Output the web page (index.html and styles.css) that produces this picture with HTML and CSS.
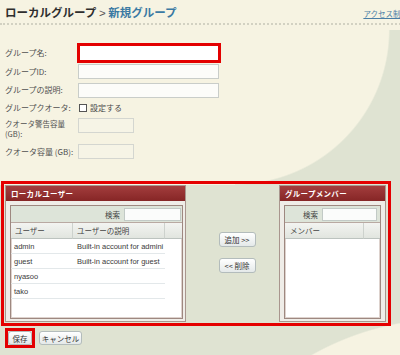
FILE: index.html
```html
<!DOCTYPE html>
<html lang="ja">
<head>
    <meta charset="UTF-8">
    <title>新規グループ</title>
    <link rel="stylesheet" href="styles.css">
</head>
<body>
    <div class="topbar">
        <h1 class="crumb">ローカルグループ <span class="sep">&gt;</span> <span class="current">新規グループ</span></h1>
        <a class="access" href="#">アクセス制御</a>
    </div>

    <div class="form">
        <label class="lbl">グループ名:</label>
        <div><input type="text" class="field field-long field-hl"></div>

        <label class="lbl">グループID:</label>
        <div><input type="text" class="field field-long"></div>

        <label class="lbl">グループの説明:</label>
        <div><input type="text" class="field field-long"></div>

        <label class="lbl">グループクオータ:</label>
        <div class="check"><input type="checkbox" class="box"> <span>設定する</span></div>

        <label class="lbl lbl-two">クオータ警告容量<br>(GB):</label>
        <div><input type="text" class="field field-short"></div>

        <label class="lbl">クオータ容量 (GB):</label>
        <div><input type="text" class="field field-short"></div>
    </div>

    <div class="transfer">
        <div class="panel panel-users">
            <div class="panel-head">ローカルユーザー</div>
            <div class="panel-body">
                <div class="listbox">
                    <div class="search">
                        <span>検索</span>
                        <input type="text" class="search-input">
                    </div>
                    <div class="grid users-grid">
                        <div class="th">ユーザー</div>
                        <div class="th">ユーザーの説明</div>
                        <div class="th th-blank"></div>

                        <div class="td">admin</div>
                        <div class="td">Built-in account for admini</div>
                        <div class="td-blank"></div>

                        <div class="td">guest</div>
                        <div class="td">Built-in account for guest</div>
                        <div class="td-blank"></div>

                        <div class="td">nyasoo</div>
                        <div class="td"></div>
                        <div class="td-blank"></div>

                        <div class="td">tako</div>
                        <div class="td"></div>
                        <div class="td-blank"></div>
                    </div>
                </div>
            </div>
        </div>

        <div class="actions">
            <button class="btn">追加 &gt;&gt;</button>
            <button class="btn">&lt;&lt; 削除</button>
        </div>

        <div class="panel panel-members">
            <div class="panel-head">グループメンバー</div>
            <div class="panel-body">
                <div class="listbox">
                    <div class="search">
                        <span>検索</span>
                        <input type="text" class="search-input">
                    </div>
                    <div class="grid members-grid">
                        <div class="th">メンバー</div>
                        <div class="th th-blank"></div>
                    </div>
                </div>
            </div>
        </div>
    </div>

    <div class="footer">
        <span class="hl"><button class="btn btn-save">保存</button></span>
        <button class="btn btn-cancel">キャンセル</button>
    </div>
</body>
</html>
```

FILE: styles.css
```css
html, body {
    margin: 0;
    height: 100%;
    overflow: hidden;
}

body {
    font-family: "Noto Sans CJK JP", "Liberation Sans", sans-serif;
    font-size: 8px;
    color: #4a4a4a;
    /* cream page with the grey-green swoosh behind the panels */
    background:
        radial-gradient(circle 155px at 235px 30px, #f6f3e2 99%, rgba(246,243,226,0) 100%),
        linear-gradient(#f6f3e2, #f6f3e2) 0 0 / 235px 185px no-repeat,
        linear-gradient(#f6f3e2, #f6f3e2) 0 0 / 400px 30px no-repeat,
        radial-gradient(circle 282px at 450px 600px, #f6f3e2 99.5%, rgba(246,243,226,0) 100%),
        #dfe3d2;
}

/* header */
.topbar {
    width: 403px;
    height: 23px;
    padding-left: 5px;
    display: flex;
    justify-content: space-between;
    border-bottom: 2px dotted #d2d1c2;
}

.crumb {
    margin: 5px 0 0;
    font-size: 11.5px;
    line-height: 14px;
    font-weight: bold;
    color: #2e2e2e;
}

.crumb .sep {
    font-family: "Liberation Sans", sans-serif;
    font-weight: normal;
    color: #555;
}

.crumb .current {
    color: #3b7aa3;
}

.access {
    margin-top: 9px;
    font-size: 7.5px;
    line-height: 10px;
    color: #4a7ea6;
    white-space: nowrap;
}

/* form */
.form {
    margin-top: 18px;
    display: grid;
    grid-template-columns: 73px 1fr;
    grid-template-rows: 20px 17px 20px 15px 21px 31px;
    align-items: center;
    padding-left: 5px;
}

.lbl {
    line-height: 10px;
    color: #505050;
    white-space: nowrap;
}

.lbl-two {
    align-self: start;
    margin-top: 4px;
    font-size: 7.5px;
}

.form > div {
    display: flex;
    align-items: center;
}

.field {
    box-sizing: border-box;
    height: 15px;
    margin: 0;
    padding: 0 2px;
    border: 1px solid #c9cdc9;
    background: #fcfcf9;
    font-size: 8px;
}

.field-long {
    width: 141px;
}

.field-hl {
    width: 144px;
    height: 20px;
    margin-left: -1px;
    border: 3px solid #e30000;
    background: #fff;
}

.field-short {
    width: 56px;
    background: #f6f4e6;
    border-color: #d4d6d0;
}

.check {
    gap: 3px;
}

.box {
    appearance: none;
    box-sizing: border-box;
    width: 8px;
    height: 8px;
    margin: 0 0 0 1px;
    border: 1px solid #555;
    background: #fff;
}

/* transfer area */
.transfer {
    box-sizing: border-box;
    width: 390px;
    height: 145px;
    margin: 14px 0 0 1px;
    padding: 1px 2px 1px 1px;
    border: 3px solid #e50000;
    display: flex;
}

.panel {
    display: flex;
    flex-direction: column;
    border: 1px solid #a9968e;
    background: #efede8;
}

.panel-users {
    width: 179px;
}

.panel-members {
    width: 105px;
}

.panel-head {
    height: 15px;
    padding-left: 5px;
    line-height: 15px;
    font-size: 7.5px;
    font-weight: bold;
    letter-spacing: 0.3px;
    color: #fff;
    background: linear-gradient(#a33d3d, #862626);
}

.panel-body {
    flex: 1;
    display: flex;
    padding: 4px 2px 2px 4px;
}

.panel-members .panel-body {
    padding-right: 4px;
}

.listbox {
    flex: 1;
    display: flex;
    flex-direction: column;
    border: 1px solid #9e8880;
    box-shadow: inset 0 0 0 1px #ddd2cd;
    background: #fff;
}

.search {
    height: 16px;
    display: flex;
    align-items: center;
    justify-content: flex-end;
    gap: 4px;
    padding-right: 1px;
    background: #dde4d9;
    border-bottom: 1px solid #b9a9a2;
    font-size: 7.5px;
    color: #444;
}

.search-input {
    box-sizing: border-box;
    width: 57px;
    height: 13px;
    margin: 0;
    border: 1px solid #c2cac6;
    background: #fbfcfb;
}

.panel-members .search-input {
    width: 55px;
    margin-right: 2px;
}

.grid {
    display: grid;
    grid-template-rows: 16px;
    grid-auto-rows: 15px;
}

.users-grid {
    grid-template-columns: 62px 92px 1fr;
}

.members-grid {
    grid-template-columns: 79px 1fr;
}

.th {
    box-sizing: border-box;
    height: 16px;
    padding-left: 4px;
    line-height: 16px;
    font-size: 7.5px;
    color: #444;
    background: linear-gradient(#f3f4f1, #e1e5df);
    border-right: 1px solid #cdd2cd;
    border-bottom: 1px solid #bcc3bf;
}

.th-blank {
    border-right: none;
}

.members-grid .th {
    padding-left: 5px;
}

.td {
    box-sizing: border-box;
    padding-left: 3px;
    line-height: 15px;
    font-family: "Liberation Sans", sans-serif;
    font-size: 7.5px;
    color: #3a3a3a;
    white-space: nowrap;
    overflow: hidden;
    border-bottom: 1px solid #e3e8ea;
}

.td + .td {
    padding-left: 4px;
}

.actions {
    flex: 1;
    display: flex;
    flex-direction: column;
    align-items: center;
    gap: 11px;
    padding: 47px 0 0 9px;
}

/* buttons */
.btn {
    box-sizing: border-box;
    height: 15px;
    padding: 0 4px;
    border: 1px solid #b3bcbc;
    border-radius: 3px;
    background: linear-gradient(#ffffff, #e4e9e9);
    font-family: "Noto Sans CJK JP", "Liberation Sans", sans-serif;
    font-size: 7.5px;
    line-height: 13px;
    color: #333;
}

.actions .btn {
    width: 37px;
}

.footer {
    margin: 2px 0 0 5px;
    display: flex;
    align-items: center;
    gap: 4px;
}

.hl {
    display: flex;
    border: 3px solid #e30000;
}

.btn-save {
    width: 24px;
    height: 14px;
    padding: 0;
}

.btn-cancel {
    width: 43px;
    height: 14px;
    padding: 0;
}
```
